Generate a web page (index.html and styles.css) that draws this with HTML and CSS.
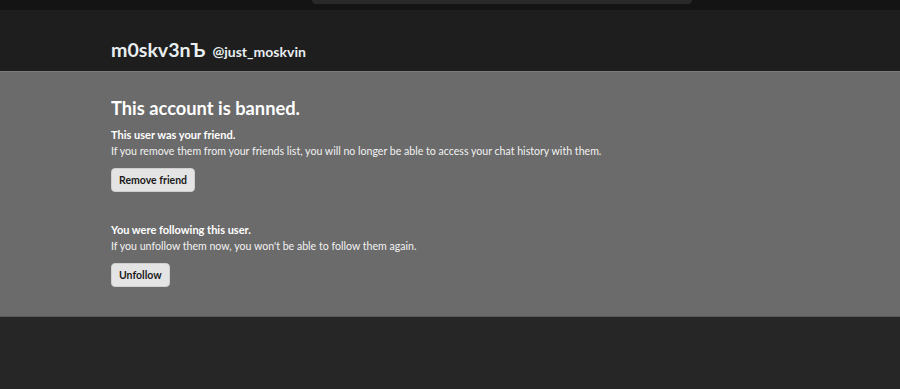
FILE: index.html
```html
<!DOCTYPE html>
<html lang="en">
<head>
    <meta charset="utf-8">
    <title>m0skv3nЪ</title>
    <link rel="stylesheet" href="styles.css">
</head>
<body>
<div class="topbar">
    <div class="search"></div>
</div>
<div class="header">
    <div class="wrap">
        <span class="name">m0skv3nЪ</span>
        <span class="handle">@just_moskvin</span>
    </div>
</div>
<div class="panel">
    <div class="wrap">
        <h1>This account is banned.</h1>

        <div class="section">
            <div class="label">This user was your friend.</div>
            <div class="desc">If you remove them from your friends list, you will no longer be able to access your chat history with them.</div>
            <button class="btn">Remove friend</button>
        </div>

        <div class="section">
            <div class="label">You were following this user.</div>
            <div class="desc">If you unfollow them now, you won't be able to follow them again.</div>
            <button class="btn">Unfollow</button>
        </div>
    </div>
</div>
<div class="footer"></div>
</body>
</html>
```

FILE: styles.css
```css
body {
    margin: 0;
    font-family: Lato, "Open Sans", sans-serif;
    background-color: #262626;
    color: #fff;
}
.topbar {
    height: 10px;
    background-color: #141414;
    display: flex;
    justify-content: center;
}
.search {
    width: 380px;
    height: 4px;
    margin-left: 104px;
    background-color: #292929;
    border-radius: 0 0 4px 4px;
}
.wrap {
    padding-left: 111px;
}
.header {
    height: 61px;
    background-color: #1e1e1e;
    box-sizing: border-box;
    padding-top: 28px;
}
.header .wrap {
    display: flex;
    align-items: baseline;
    gap: 7px;
}
.name {
    font-size: 19.6px;
    font-weight: bold;
    color: #e8eef0;
}
.handle {
    font-size: 14px;
    font-weight: bold;
    color: #e8eef0;
}
.panel {
    background-color: #6b6b6b;
    border-top: 1px solid #7b7b7b;
    border-bottom: 1px solid #5a5a5a;
    height: 246px;
    padding-top: 24px;
    box-sizing: border-box;
}
h1 {
    margin: 0 0 6px;
    font-size: 18.3px;
    line-height: 24px;
}
.section {
    margin-bottom: 29px;
}
.label {
    font-size: 11px;
    font-weight: bold;
    line-height: 17px;
}
.desc {
    font-size: 10.6px;
    line-height: 17px;
    color: #f2f2f2;
}
.btn {
    display: block;
    margin-top: 8px;
    height: 24px;
    padding: 0 7px;
    border: 1px solid #cfcfcf;
    border-radius: 4px;
    background-color: #e4e4e4;
    color: #1a1a1a;
    font-family: inherit;
    font-size: 10.5px;
    font-weight: bold;
}
```
